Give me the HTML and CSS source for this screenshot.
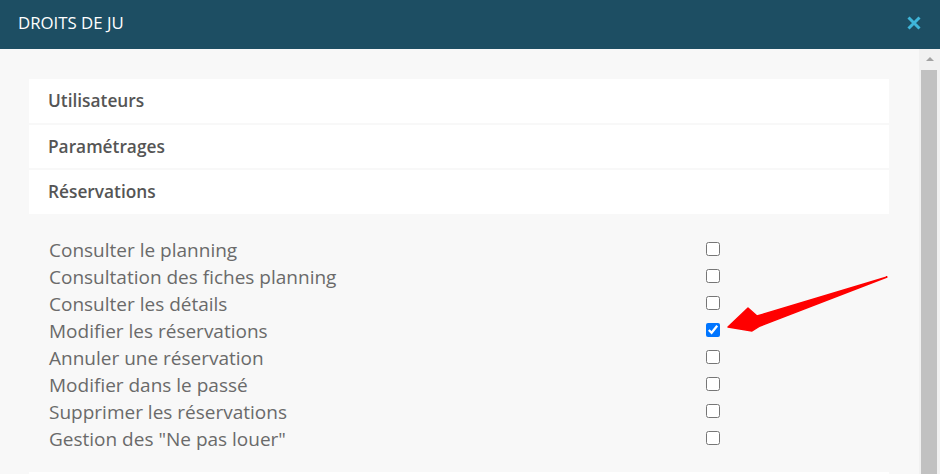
FILE: index.html
```html
<!DOCTYPE html>
<html lang="fr">
<head>
<meta charset="utf-8">
<title>Droits de JU</title>
<link rel="stylesheet" href="styles.css">
</head>
<body>
<div class="modal">
  <header class="modal-header">
    <h1 class="modal-title">DROITS DE JU</h1>
    <svg class="modal-close" width="14" height="14" viewBox="0 0 14 14">
      <path d="M1.5 1.5 L12.5 12.5 M12.5 1.5 L1.5 12.5" stroke="#3fb6da" stroke-width="3" stroke-linecap="butt"/>
    </svg>
  </header>
  <div class="modal-main">
    <div class="modal-body">
      <div class="section-row">Utilisateurs</div>
      <div class="section-row">Paramétrages</div>
      <div class="section-row">Réservations</div>
      <div class="rights">
        <div class="right"><span class="right-label">Consulter le planning</span><input type="checkbox" class="right-check"></div>
        <div class="right"><span class="right-label">Consultation des fiches planning</span><input type="checkbox" class="right-check"></div>
        <div class="right"><span class="right-label">Consulter les détails</span><input type="checkbox" class="right-check"></div>
        <div class="right"><span class="right-label">Modifier les réservations</span><input type="checkbox" class="right-check" checked></div>
        <div class="right"><span class="right-label">Annuler une réservation</span><input type="checkbox" class="right-check"></div>
        <div class="right"><span class="right-label">Modifier dans le passé</span><input type="checkbox" class="right-check"></div>
        <div class="right"><span class="right-label">Supprimer les réservations</span><input type="checkbox" class="right-check"></div>
        <div class="right"><span class="right-label">Gestion des "Ne pas louer"</span><input type="checkbox" class="right-check"></div>
      </div>
      <div class="section-row"></div>
      <svg class="annot-arrow" width="180" height="70" viewBox="720 270 180 70">
        <polygon points="887,277 757,316 748,308 728,327 752,331 760,326" fill="#ff0000" stroke="#ff0000" stroke-width="1.4" stroke-linejoin="round"/>
      </svg>
    </div>
    <div class="scrollbar">
      <div class="scroll-up"></div>
      <div class="scroll-thumb"></div>
    </div>
  </div>
</div>
</body>
</html>
```
FILE: styles.css
```css
html, body {
  margin: 0;
  padding: 0;
  height: 100%;
  overflow: hidden;
  background: #f8f8f8;
  font-family: "Open Sans", "Noto Sans", sans-serif;
}
.modal {
  display: flex;
  flex-direction: column;
  height: 474px;
}
.modal-header {
  height: 49px;
  flex: none;
  background: #1d4e63;
  display: flex;
  align-items: center;
  justify-content: space-between;
  padding: 0 19px 0 18px;
  box-sizing: border-box;
}
.modal-title {
  margin: 0;
  color: #ffffff;
  font-size: 16.8px;
  font-weight: 400;
  padding-bottom: 4px;
}
.modal-close {
  display: block;
  margin-bottom: 4px;
}
.modal-main {
  flex: 1;
  display: flex;
  min-height: 0;
}
.modal-body {
  position: relative;
  flex: 1;
  padding: 30px 30px 0 29px;
  display: flex;
  flex-direction: column;
  gap: 2px;
  overflow: hidden;
}
.section-row {
  background: #ffffff;
  height: 43.5px;
  flex: none;
  display: flex;
  align-items: center;
  padding-left: 19px;
  color: #555555;
  font-size: 17.3px;
  font-weight: 600;
}
.rights {
  padding: 21px 0 17.5px 20px;
  flex: none;
}
.right {
  display: grid;
  grid-template-columns: 657px 14px;
  height: 27px;
  align-items: center;
}
.right-label {
  color: #6a6a6a;
  font-size: 19px;
  white-space: nowrap;
}
.right-check {
  width: 14px;
  height: 14px;
  margin: 0 0 3px 0;
}
.annot-arrow {
  position: absolute;
  left: 720px;
  top: 221px;
}
.scrollbar {
  width: 21px;
  flex: none;
  background: #f1f1f1;
  display: flex;
  flex-direction: column;
  align-items: center;
}
.scroll-up {
  width: 0;
  height: 0;
  border-left: 4px solid transparent;
  border-right: 4px solid transparent;
  border-bottom: 4px solid #a3a3a3;
  margin-top: 8px;
}
.scroll-thumb {
  margin-top: 9px;
  width: 16px;
  flex: 1;
  background: #c1c1c1;
  margin-right: 1px;
}
```
